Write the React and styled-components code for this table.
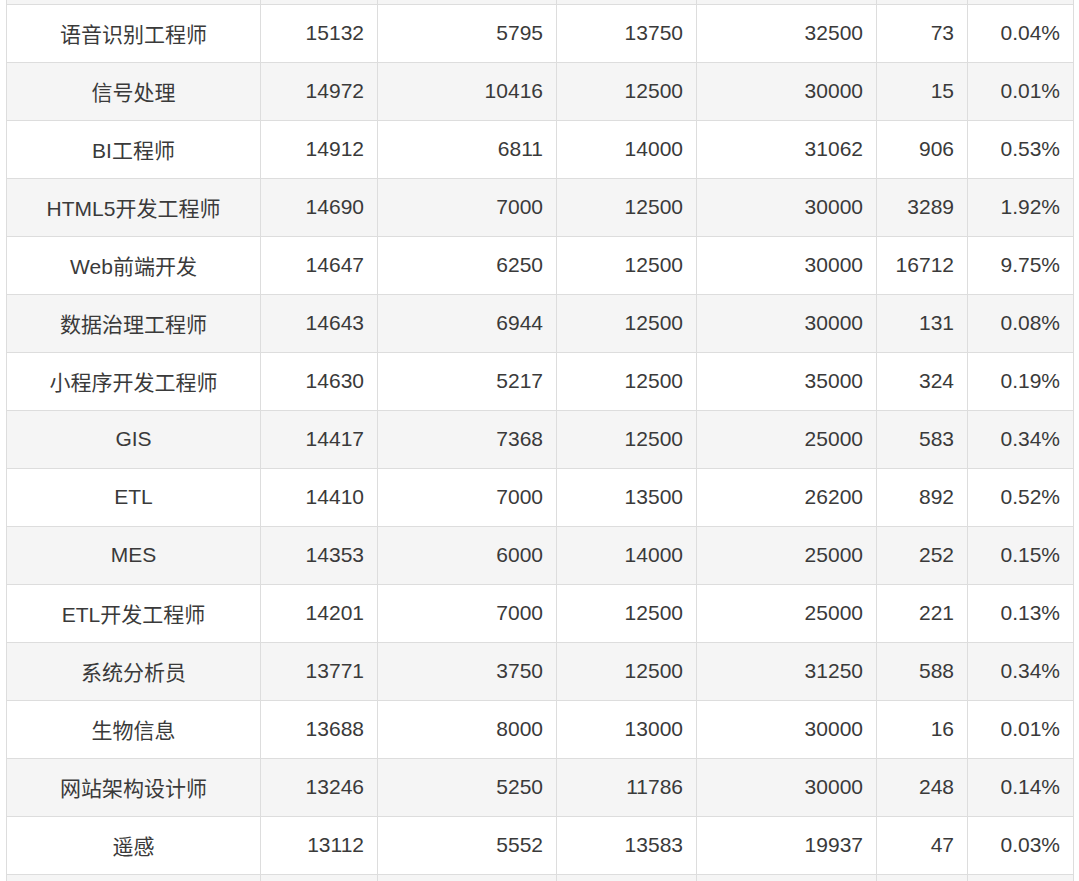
import React from "react";
import styled, { createGlobalStyle } from "styled-components";

const GlobalStyle = createGlobalStyle`
  html, body {
    margin: 0;
    padding: 0;
    background: #fff;
  }
`;

const rows = [
  ["语音识别工程师", 15132, 5795, 13750, 32500, 73, "0.04%"],
  ["信号处理", 14972, 10416, 12500, 30000, 15, "0.01%"],
  ["BI工程师", 14912, 6811, 14000, 31062, 906, "0.53%"],
  ["HTML5开发工程师", 14690, 7000, 12500, 30000, 3289, "1.92%"],
  ["Web前端开发", 14647, 6250, 12500, 30000, 16712, "9.75%"],
  ["数据治理工程师", 14643, 6944, 12500, 30000, 131, "0.08%"],
  ["小程序开发工程师", 14630, 5217, 12500, 35000, 324, "0.19%"],
  ["GIS", 14417, 7368, 12500, 25000, 583, "0.34%"],
  ["ETL", 14410, 7000, 13500, 26200, 892, "0.52%"],
  ["MES", 14353, 6000, 14000, 25000, 252, "0.15%"],
  ["ETL开发工程师", 14201, 7000, 12500, 25000, 221, "0.13%"],
  ["系统分析员", 13771, 3750, 12500, 31250, 588, "0.34%"],
  ["生物信息", 13688, 8000, 13000, 30000, 16, "0.01%"],
  ["网站架构设计师", 13246, 5250, 11786, 30000, 248, "0.14%"],
  ["遥感", 13112, 5552, 13583, 19937, 47, "0.03%"],
];

const widths = [254, 117, 179, 140, 180, 91, 106];

function App() {
  return (
    <Viewport>
      <GlobalStyle />
      <Table>
        <colgroup>
          {widths.map((w, i) => (
            <col key={i} style={{ width: w }} />
          ))}
        </colgroup>
        <tbody>
          <EdgeRow $striped $h={4}>
            {widths.map((_, i) => (
              <EdgeCell key={i} $top />
            ))}
          </EdgeRow>
          {rows.map((r, idx) => (
            <Row key={r[0]} $striped={idx % 2 === 1}>
              <NameCell>{r[0]}</NameCell>
              {r.slice(1).map((v, i) => (
                <NumCell key={i}>{v}</NumCell>
              ))}
            </Row>
          ))}
          <EdgeRow $striped $h={20}>
            {widths.map((_, i) => (
              <EdgeCell key={i} />
            ))}
          </EdgeRow>
        </tbody>
      </Table>
    </Viewport>
  );
}

export default App;

const Viewport = styled.div`
  height: 881px;
  overflow: hidden;
  padding-left: 6px;
  font-family: "Liberation Sans", "Noto Sans CJK SC", sans-serif;
  color: #3a3a3a;
`;

const Table = styled.table`
  border-collapse: collapse;
  table-layout: fixed;
  width: 1068px;
  font-size: 21px;
`;

const Row = styled.tr`
  height: 58px;
  background: ${(p) => (p.$striped ? "#f5f5f5" : "#fff")};
`;

const EdgeRow = styled.tr`
  height: ${(p) => p.$h}px;
  background: ${(p) => (p.$striped ? "#f5f5f5" : "#fff")};
`;

const Cell = styled.td`
  border: 1px solid #ddd;
  padding: 0 13px;
  vertical-align: middle;
  white-space: nowrap;
  box-sizing: border-box;
`;

const NameCell = styled(Cell)`
  text-align: center;
`;

const NumCell = styled(Cell)`
  text-align: right;
`;

const EdgeCell = styled(Cell)`
  padding: 0;
  border-top: ${(p) => (p.$top ? "none" : "1px solid #ddd")};
`;
